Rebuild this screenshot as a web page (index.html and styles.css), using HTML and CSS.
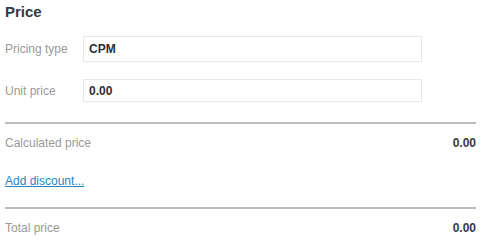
FILE: index.html
```html
<!DOCTYPE html>
<html>
    <head>
        <title>
            Price
        </title>
        <link rel="stylesheet" href="styles.css">
    </head>
    <body>
        <div class="price-box">
            <p class="title">Price</p>

            <div class="field-row pricing-type">
                <span class="field-label">Pricing type</span>
                <div class="field-value">CPM</div>
            </div>
            <div class="field-row unit-price">
                <span class="field-label">Unit price</span>
                <div class="field-value">0.00</div>
            </div>

            <div class="divider"></div>

            <div class="summary-row calculated">
                <span class="summary-label">Calculated price</span>
                <span class="summary-value">0.00</span>
            </div>

            <a class="add-discount" href="#">Add discount...</a>

            <div class="divider second"></div>

            <div class="summary-row total">
                <span class="summary-label">Total price</span>
                <span class="summary-value">0.00</span>
            </div>
        </div>
    </body>
</html>
```

FILE: styles.css
```css
body {
    margin: 0;
    background-color: white;
    font-family: "Liberation Sans", Arial, sans-serif;
}
.price-box {
    padding: 0 8px 0 5px;
}
.title {
    margin: 0;
    padding-top: 3px;
    font-size: 15px;
    font-weight: bold;
    line-height: 18px;
    color: #333a45;
}
.field-row {
    display: flex;
    align-items: center;
}
.pricing-type {
    margin-top: 15px;
}
.unit-price {
    margin-top: 17px;
}
.field-label {
    width: 78px;
    font-size: 12px;
    color: #999999;
}
.field-value {
    display: flex;
    align-items: center;
    box-sizing: border-box;
    width: 339px;
    padding-left: 5px;
    border: 1px solid #e8e8e8;
    font-size: 12px;
    font-weight: bold;
    color: #2b3038;
}
.pricing-type .field-value {
    height: 26px;
}
.unit-price .field-value {
    height: 23px;
}
.divider {
    margin-top: 20px;
    height: 2px;
    background-color: #bbbbbb;
}
.divider.second {
    margin-top: 19px;
}
.summary-row {
    display: flex;
    justify-content: space-between;
    margin-top: 12px;
    line-height: 14px;
    font-size: 12px;
}
.summary-label {
    color: #999999;
}
.summary-value {
    font-weight: bold;
    color: #333a45;
}
.add-discount {
    display: block;
    margin-top: 24px;
    line-height: 14px;
    font-size: 12px;
    color: #2a83c2;
}
```
